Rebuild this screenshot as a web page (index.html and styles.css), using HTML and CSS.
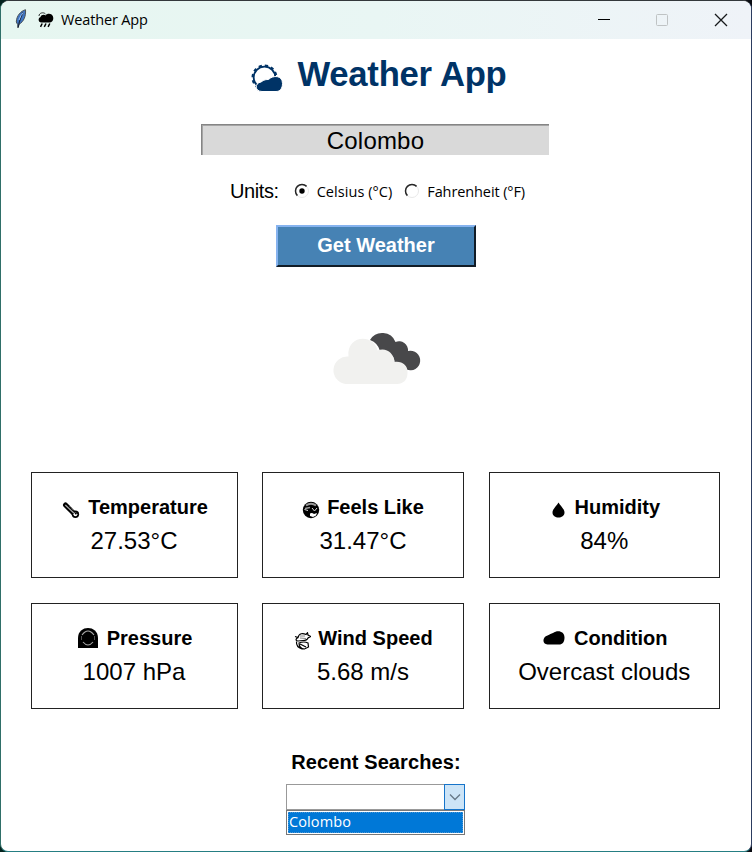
FILE: index.html
```html
<!DOCTYPE html>
<html lang="en">
<head>
<meta charset="utf-8">
<title>Weather App</title>
<link rel="stylesheet" href="styles.css">
</head>
<body>
<div class="window">
  <header class="titlebar">
    <svg class="feather" width="12" height="20" viewBox="0 0 12 20"><path d="M10.500 .7C6 2 1.500 6.500 1.300 13L2.600 15.500 3 19l.8-3.500C9 12.500 11 7 10.500.7Z" fill="#3f76c4" stroke="#485055" stroke-width="1"/><path d="M8.500 3C6 7 4.500 11 3.300 18" fill="none" stroke="#17233a" stroke-width="1.200"/><path d="M8.500 3.500 6 6.500 4 11" fill="none" stroke="#9fc6f6" stroke-width="1"/></svg>
    <svg class="rain" width="16" height="16" viewBox="0 0 16 16"><path d="M3.500 10.500C0 10.500-.2 6 2.300 5.300 3 2.800 6 2.200 7.500 3.400 10 .4 15.500 2 15.300 6.300c0 2.700-1.500 4.200-3.800 4.200Z"/><path d="M1 4C1 .8 5.500-.2 7.500 2" fill="none" stroke="#000" stroke-width=".8"/><path d="m4.200 11.500-1.700 3.300M8 11.500l-1.700 3.300M11.800 11.500l-1.700 3.300" stroke="#000" stroke-width="1.500"/></svg>
    <span class="caption">Weather App</span>
    <svg class="controls" width="140" height="16" viewBox="0 0 140 16"><path d="M6 7.500h12" stroke="#000" stroke-width="1"/><rect x="64.500" y="2.500" width="11" height="11" rx="1" fill="none" stroke="#bfc3c4"/><path d="m123 2 12 12m0-12-12 12" stroke="#16191b" stroke-width="1.300"/></svg>
  </header>
  <main class="content">
    <h1 class="title">
      <svg class="sun" width="34" height="28" viewBox="0 0 34 28"><circle cx="14.500" cy="13.500" r="10.800" fill="none" stroke="#003366" stroke-width="1.800"/><circle cx="14.500" cy="13.500" r="12" fill="none" stroke="#003366" stroke-width="2" stroke-dasharray="3.280 3"/><path d="M12 27.500C4.500 27.500 4.500 19 11 18 14 15.500 16.500 15.500 18.500 15.500 23 11 32.500 11 32.500 19.500c0 5-2.500 8-6.500 8Z" fill="#003366" stroke="#fff" stroke-width="1"/></svg>
      <span>Weather App</span>
    </h1>
    <div class="entry"><span>Colombo</span></div>
    <div class="units">
      <span class="units-label">Units:</span>
      <svg width="16" height="16" viewBox="0 0 16 16"><circle cx="8" cy="8" r="6.500" fill="#fff" stroke="#e8e8e8"/><path d="M3.400 12.600A6.500 6.500 0 0 1 12.600 3.400" fill="none" stroke="#262626" stroke-width="1.500"/><circle cx="8" cy="8" r="2.700"/></svg>
      <span class="option celsius">Celsius (°C)</span>
      <svg width="16" height="16" viewBox="0 0 16 16"><circle cx="8" cy="8" r="6.500" fill="#fff" stroke="#e8e8e8"/><path d="M3.400 12.600A6.500 6.500 0 0 1 12.600 3.400" fill="none" stroke="#262626" stroke-width="1.500"/></svg>
      <span class="option fahrenheit">Fahrenheit (°F)</span>
    </div>
    <button class="get">Get Weather</button>
    <svg class="clouds" width="92" height="60" viewBox="0 0 92 60"><path d="M38 14A14.300 14.300 0 0 1 63.500 16 9 9 0 0 1 76 25 9.800 9.800 0 1 1 74.500 43.500Q72 38 62.500 36 62 26 48 25 46 17 38 14Z" fill="#48484a"/><path d="M14 58A13.500 13.500 0 0 1 16.500 30.500C14 9 42 7 45.500 24.500 54 21 62 27 62.500 36 70 35 76 39 75.500 47 75.500 54 71 58 65 58Z" fill="#f1f1ef"/></svg>
    <section class="cards">
      <article class="card"><h2><svg class="i-temp" width="18" height="16" viewBox="0 0 18 16"><path d="M3.500 3 11.500 11" stroke="#000" stroke-width="5" stroke-linecap="round"/><circle cx="13.400" cy="12.300" r="3.700"/><path d="m3.300 3 8.500 8" stroke="#aaa" stroke-width="1.200"/><path d="m8 4.500 4.500 4.500" stroke="#fff" stroke-width=".8" stroke-dasharray="1 1"/><circle cx="13.400" cy="12.300" r="1.900" fill="#fff"/><circle cx="13.800" cy="11.500" r="1.100"/></svg><span>Temperature</span></h2><p>27.53°C</p></article>
      <article class="card"><h2><svg class="i-feel" width="18" height="18" viewBox="0 0 18 18"><circle cx="9" cy="9" r="8.200"/><path d="M4 4.500Q9 1 14 4.500" fill="none" stroke="#999" stroke-width="2"/><path d="m2.500 8.500 3.500 1M10 7l2.500 3 2.500-3" fill="none" stroke="#ddd"/><path d="M8 12.500q2-1 4 .5l3-1-1 2.500-3 1.500-3-1Z" fill="#fff"/><path d="M3 7.500l5-1" stroke="#999" stroke-width="1.300"/></svg><span>Feels Like</span></h2><p>31.47°C</p></article>
      <article class="card"><h2><svg class="i-drop" width="13" height="16" viewBox="0 0 13 16"><path d="M6.500.5C8.500 4 12.500 7 12.500 10.500 12.500 17.200.5 17.200.5 10.500.5 7 4.500 4 6.500.5Z"/></svg><span>Humidity</span></h2><p>84%</p></article>
      <article class="card"><h2><svg class="i-press" width="20" height="20" viewBox="0 0 20 20"><path d="M0 20V10C0-3.300 20-3.300 20 10V20Z"/><path d="M4 7Q10-1 16 7M5 14q5 6 10 0" fill="none" stroke="#aaa" stroke-width="1.100"/><path d="M3.500 8v4M16.500 8v4" stroke="#666" stroke-width=".8"/></svg><span>Pressure</span></h2><p>1007 hPa</p></article>
      <article class="card"><h2><svg class="i-wind" width="17" height="18" viewBox="0 0 17 18" fill="none" stroke="#000"><path d="M1 4.500 4 5.500C5 1 9 1 12 2.500L13.500.8 14 3l2.500 1.500L14 6Q13 8.500 9 8.500L4 9Q0 8 4 5.500" stroke-width="1.200"/><path d="M5 11q5-2 9 0l.5 4-4 2Q5 16.500 5 11Zm1 1 6 3M2.500 9.500Q2 15 8 17" stroke-width="1.200"/><path d="M6 4h5M6 6l6 .5" stroke="#888"/></svg><span>Wind Speed</span></h2><p>5.68 m/s</p></article>
      <article class="card"><h2><svg class="i-cloud" width="22" height="14" viewBox="0 0 22 14"><path d="M4.500 13.500C-1 13.500-.8 6 4.500 4.500 7 3.500 8 2.500 10 2 15-1.500 21.500.5 21.500 6.500c0 4.500-2 7-5.500 7Z"/></svg><span>Condition</span></h2><p>Overcast clouds</p></article>
    </section>
    <h3 class="recent">Recent Searches:</h3>
    <div class="combo">
      <div class="field"></div>
      <div class="arrow"><svg width="12" height="8" viewBox="0 0 12 8"><path d="m1 1.500 5 5 5-5" fill="none" stroke="#667788" stroke-width="1.300"/></svg></div>
    </div>
    <div class="list"><div class="item">Colombo</div></div>
  </main>
</div>
</body>
</html>
```
FILE: styles.css
```css
* { box-sizing: border-box; }
html { background: linear-gradient(90deg, #04231e 0 30px, #24222c 60px 720px, #080a10); }
body { margin: 0; height: 852px; overflow: hidden; font-family: "Liberation Sans", Arial, sans-serif; color: #000; }
.window { height: 852px; border: 1px solid; border-color: #33383b #2c3c60 #257e83 #2f6f68; border-radius: 9px 9px 8px 8px; background: #fff; overflow: hidden; }
.titlebar { height: 38px; display: flex; align-items: center; padding-left: 14px; background: linear-gradient(90deg, #e6f6f0, #e9f6f4 50%, #eff3f8); }
.feather { margin-top: -2px; }
.rain { margin-left: 11px; }
.caption { margin: -2px 0 0 7px; font: 14.5px "Open Sans", "Noto Sans", sans-serif; letter-spacing: -.15px; white-space: nowrap; }
.controls { margin-left: auto; margin-right: 19px; }
.content { display: flex; flex-direction: column; align-items: center; }
h1, h2, h3, p { margin: 0; }
.title { height: 70px; padding-top: 1px; display: flex; align-items: center; color: #003366; font-size: 34.67px; letter-spacing: -.25px; white-space: nowrap; padding-left: 5px; }
.title svg { margin: 7px 13px 0 0; }
.entry { width: 348px; height: 31px; margin: 15px 2px 0 0; background: #d9d9d9; border-top: 1px solid #858585; border-left: 1px solid #858585; box-shadow: inset 1px 1px #a5a5a5; text-align: center; font-size: 24px; line-height: 31px; letter-spacing: .2px; }
.units { height: 36px; margin-top: 18px; display: flex; align-items: center; white-space: nowrap; padding-left: 3px; }
.units-label { font-size: 20px; letter-spacing: -.4px; margin-right: 15px; }
.option { font: 14.5px "Open Sans", "Noto Sans", sans-serif; margin-left: 7px; letter-spacing: .05px; }
.celsius { margin-right: 12px; }
.fahrenheit { letter-spacing: -.1px; }
.get { width: 200px; height: 42px; margin-top: 16px; padding: 0 0 2px; background: #4682b4; border: 2px solid; border-color: #86b3ef #111c26 #111c26 #86b3ef; color: #fff; font: bold 20px "Liberation Sans", Arial, sans-serif; }
.clouds { margin: 59px 0 0 3px; }
.cards { width: 690px; margin: 86px 1px 0 0; display: grid; grid-template-columns: 207px 202px 231.500px; column-gap: 24.500px; row-gap: 25px; }
.card { height: 106px; border: 1px solid #222; padding-top: 22px; text-align: center; white-space: nowrap; }
.card h2 { height: 24px; display: flex; justify-content: center; align-items: center; font-size: 20px; }
.card h2 svg { margin-top: 5px; }
.card .i-press { margin-top: 0; }
.card .i-cloud { margin-top: 0; }
.card p { font-size: 24px; line-height: 28px; margin-top: 8px; }
.i-temp { margin: 0 8px 0 2px; }
.i-press { margin: 0 9px 0 2px; }
.i-feel { margin-right: 7px; }
.i-wind { margin: 0 7px 0 1px; }
.i-drop { margin: 0 9px 0 4px; }
.i-cloud { margin: 0 9px 0 2px; }
.recent { font-size: 20px; line-height: 24px; margin-top: 41px; letter-spacing: .1px; }
.combo { display: flex; width: 179px; height: 26px; margin: 10px 1px 0 0; }
.field { flex: 1; border: 1px solid #999; border-right: 0; }
.arrow { width: 21px; border: 1px solid #1674ca; background: #cce4f7; display: flex; align-items: center; justify-content: center; }
.list { width: 179px; height: 25px; margin-right: 1px; border: 1px solid #777; padding: 1px; }
.item { height: 21px; background: #0078d7; color: #fff; border: 1px dotted #4d96d2; font: 14.500px/18px "Open Sans", "Noto Sans", sans-serif; letter-spacing: .1px; }
```
